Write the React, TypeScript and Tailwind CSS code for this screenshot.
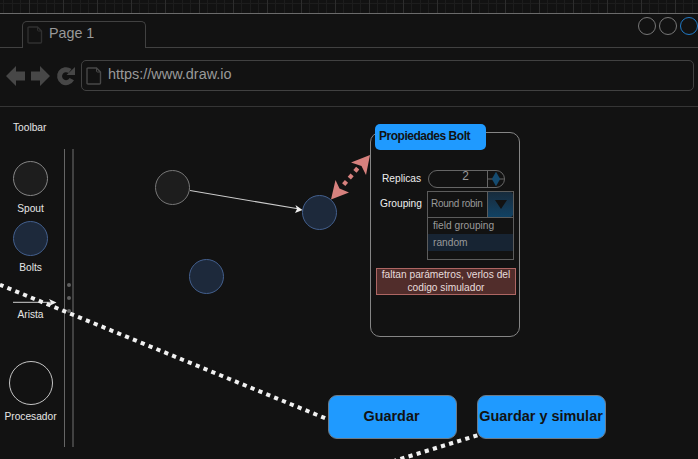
import type { ReactNode } from "react";

const PageIcon = ({ className }: { className: string }) => (
  <svg className={className} viewBox="0 0 16 18" fill="none" stroke="currentColor" strokeWidth="1.4">
    <path d="M2 1H10.5L14.5 5V16Q14.5 17 13.5 17H2Q1 17 1 16V2Q1 1 2 1Z" />
    <path d="M10.5 1V4Q10.5 5 11.5 5H14.5" strokeWidth="1" />
  </svg>
);

const GridStrip = () => (
  <svg className="block h-[13px] w-full shrink-0" shapeRendering="crispEdges">
    <defs>
      <pattern id="grid" x="29" y="0" width="34" height="34" patternUnits="userSpaceOnUse">
        <path d="M8.5 0V34M17.5 0V34M25.5 0V34M0 3.5H34" stroke="#1d1d1d" fill="none" />
        <path d="M.5 0V34" stroke="#2d2d2d" fill="none" />
      </pattern>
    </defs>
    <rect width="100%" height="100%" fill="url(#grid)" />
  </svg>
);

const Node = ({ className }: { className: string }) => (
  <div className={`size-[35px] rounded-full border ${className}`} />
);

const Tool = ({ label, className, children }: { label: string; className: string; children: ReactNode }) => (
  <div className={`flex w-[61px] flex-col items-center ${className}`}>
    {children}
    <span className="leading-3">{label}</span>
  </div>
);

const Toolbar = () => (
  <aside className="flex h-[352px] w-[74px] shrink-0 text-[10.2px] text-[#e6e6e6]">
    <div className="flex w-[64px] flex-col">
      <span className="mt-[15px] ml-[13px] leading-3">Toolbar</span>
      <Tool label="Spout" className="mt-[27px] gap-[7px]">
        <Node className="border-[#858585] bg-[#1d1d1d]" />
      </Tool>
      <Tool label="Bolts" className="mt-[6px] gap-[6px]">
        <Node className="border-[#435f8d] bg-[#1d293b]" />
      </Tool>
      <Tool label="Arista" className="mt-[24px] gap-[2px]">
        <svg className="ml-[8px] h-[9px] w-[44px]">
          <path d="M0 4.4H39" stroke="#aaa" strokeWidth="1.3" />
          <path d="M43.5 4.5L36 8L38 4.5L36 1Z" fill="#f0f0f0" />
        </svg>
      </Tool>
      <Tool label="Procesador" className="mt-[40px] gap-[6px]">
        <div className="size-[44px] rounded-full border border-[#c5c5c5]" />
      </Tool>
    </div>
    <div className="mt-[42px] flex h-[298px] w-[10px] flex-col items-center justify-center gap-[9px] border-r-2 border-l border-r-[#414141] border-l-[#666]">
      <i className="size-[4px] rounded-full bg-[#606060]" />
      <i className="size-[4px] rounded-full bg-[#606060]" />
      <i className="size-[4px] rounded-full bg-[#606060]" />
    </div>
  </aside>
);

const PropertiesPanel = () => (
  <section className="absolute top-[25px] left-[370px] h-[205px] w-[150px] rounded-[10px] border border-[#858585] bg-[#121212] text-[10.2px] text-[#eee]">
    <h2 className="absolute top-[-9px] left-[4px] h-[26px] w-[111px] rounded-[5px] bg-[#1f9aff] pl-[4px] text-[12px] leading-[25px] font-bold tracking-[-0.48px] whitespace-nowrap text-[#121212]">
      Propiedades Bolt
    </h2>
    <div className="mt-[37px] flex h-[18px] items-center">
      <label className="w-[57px] pl-[11px]">Replicas</label>
      <div className="flex h-[18px] w-[77px] overflow-hidden rounded-full border border-[#666]">
        <span className="flex-1 pl-[15px] text-center text-[11.9px] leading-[11px] text-[#999]">2</span>
        <div className="h-[16px] w-[17px] shrink-0 border-l border-[#666]">
          <svg className="block h-[16px] w-[16px]" viewBox="0 0 16 16">
            <path d="M0 8H16" stroke="#666" />
            <path d="M8 0.8L12.2 8L8 15.2L3.8 8Z" fill="#154b70" />
          </svg>
        </div>
      </div>
    </div>
    <div className="mt-[3px] flex items-start">
      <label className="w-[56px] pl-[9px] leading-[25px]">Grouping</label>
      <div className="w-[87px] border border-[#5c5c5c] text-[#999]">
        <div className="flex h-[26px] border-b border-[#5c5c5c]">
          <span className="w-[59px] pl-[3px] text-[10px] leading-[24px] tracking-[-0.26px] whitespace-nowrap">Round robin</span>
          <div className="flex flex-1 items-center justify-center rounded-r-[3px] border-l border-[#5c5c5c] bg-linear-to-b from-[#172b3c] to-[#104264]">
            <svg className="h-[9px] w-[12px]" viewBox="0 0 12 9"><path d="M0 0H12L6 9Z" fill="#121212" /></svg>
          </div>
        </div>
        <div className="h-[16px] pl-[5px] leading-[16px]">field grouping</div>
        <div className="h-[17px] bg-[#172433] pl-[5px] leading-[17px]">random</div>
        <div className="h-[8px]" />
      </div>
    </div>
    <p className="mt-[8px] ml-[5px] h-[27px] w-[140px] border border-[#ae6663] bg-[#512d2b] text-center leading-[12.8px] whitespace-nowrap text-[#e7dcdc]">
      faltan parámetros, verlos del
      <br />
      codigo simulador
    </p>
  </section>
);

const Edges = () => (
  <svg className="pointer-events-none absolute inset-0 h-full w-full" viewBox="0 0 698 459">
    <path d="M190 190.5L298 208.8" stroke="#ccc" strokeWidth="1.1" />
    <path d="M302.5 210L295 213L297 209L295.5 205Z" fill="#eee" />
    <path d="M0 284.8L327 419" stroke="#f0f0f0" strokeWidth="4" strokeDasharray="4.2 4.28" strokeDashoffset="0.5" />
    <path d="M477.4 435.3L390 462.2" stroke="#f0f0f0" strokeWidth="4" strokeDasharray="4.2 4.28" />
    <path d="M343.7 184.7L359.5 166" stroke="#d7817e" strokeWidth="4.2" strokeDasharray="4.3 4.4" />
    <path d="M331 199.5L335.5 180L339.5 188.5L349 192.5Z" fill="#d7817e" />
    <path d="M370 155L366 175L361.5 166L351 162.5Z" fill="#d7817e" />
  </svg>
);

export default function App() {
  return (
    <main className="relative flex h-[459px] w-[698px] flex-col overflow-hidden bg-[#121212] font-['Liberation_Sans',sans-serif]">
      <GridStrip />
      <header className="flex h-[35px] shrink-0 items-end border-t border-[#6b6b6b] text-[14.3px] text-[#999]">
        <div className="h-full w-[22px] border-b border-[#414141]" />
        <div className="flex h-[27px] w-[124px] rounded-t-[5px] border border-b-0 border-[#414141]">
          <PageIcon className="mt-[4px] ml-[4px] h-[18px] w-[16px] text-[#303030]" />
          <span className="ml-[6px] leading-[23px]">Page 1</span>
        </div>
        <div className="flex h-full flex-1 justify-end gap-[3px] border-b border-[#414141] pt-[3px]">
          <i className="size-[18px] shrink-0 rounded-full border border-[#777]" />
          <i className="size-[18px] shrink-0 rounded-full border border-[#777]" />
          <i className="size-[18px] shrink-0 rounded-full border border-[#2079c5]" />
        </div>
      </header>
      <nav className="flex h-[59px] shrink-0 border-b border-[#353535] pt-[12px] text-[14.45px] text-[#999]">
        <svg className="h-[31px] w-[81px] shrink-0 text-[#474747]" fill="currentColor">
          <path d="M6 16L16 6V11.5H25V20.5H16V26Z" />
          <path d="M50 16L40 6V11.5H31V20.5H40V26Z" />
          <path d="M71.8 19.2A6.5 6.5 0 1 1 70 11" fill="none" stroke="currentColor" strokeWidth="5" />
          <path d="M75 7V15H66.5Z" />
        </svg>
        <div className="flex h-[31px] w-[613px] rounded-[5px] border border-[#414141]">
          <PageIcon className="mt-[6px] ml-[4px] h-[18px] w-[16px] text-[#484848]" />
          <span className="ml-[6px] leading-[27px]">https://www.draw.io</span>
        </div>
      </nav>
      <div className="relative flex flex-1">
        <Toolbar />
        <div className="absolute top-[63px] left-[155px]"><Node className="border-[#777] bg-[#1d1d1d]" /></div>
        <div className="absolute top-[88px] left-[302px]"><Node className="border-[#435f8d] bg-[#1d293b]" /></div>
        <div className="absolute top-[152px] left-[189px]"><Node className="border-[#435f8d] bg-[#1d293b]" /></div>
        <PropertiesPanel />
        <div className="mt-[288px] ml-[253.5px] flex h-[44px] gap-[20.5px] text-[14.45px] font-bold whitespace-nowrap text-[#121212]">
          <button className="w-[129px] rounded-[9px] border border-[#6d7b88] bg-[#1f9aff] pr-[1px]">Guardar</button>
          <button className="flex w-[129px] items-center justify-center rounded-[9px] border border-[#6d7b88] bg-[#1f9aff] pr-[1px]">Guardar y simular</button>
        </div>
      </div>
      <Edges />
    </main>
  );
}
